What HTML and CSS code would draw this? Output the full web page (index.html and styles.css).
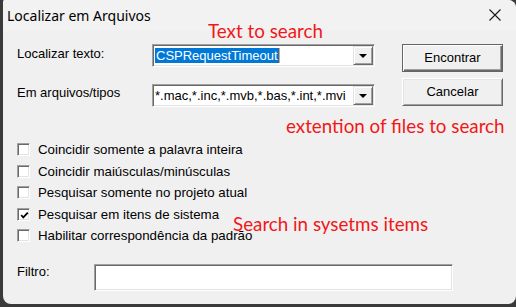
FILE: index.html
```html
<!DOCTYPE html>
<html lang="pt">
<head>
<meta charset="utf-8">
<title>Localizar em Arquivos</title>
<link rel="stylesheet" href="styles.css">
</head>
<body>
<div class="window">
  <div class="titlebar">
    <span class="title">Localizar em Arquivos</span>
    <svg class="close" width="12" height="12" viewBox="0 0 12 12"><path d="M0.5 0.5L11.5 11.5M11.5 0.5L0.5 11.5" stroke="#1a1a1a" stroke-width="1.1" fill="none"/></svg>
  </div>
  <div class="content">
    <div class="row row1">
      <span class="lbl">Localizar texto:</span>
      <div class="combo"><span class="field"><span class="sel">CSPRequestTimeout</span><span class="caret"></span></span><span class="drop"><i class="arrow"></i></span></div>
      <div class="btn default"><span class="btn-in">Encontrar</span></div>
    </div>
    <div class="row row2">
      <span class="lbl">Em arquivos/tipos</span>
      <div class="combo"><span class="field">*.mac,*.inc,*.mvb,*.bas,*.int,*.mvi</span><span class="drop"><i class="arrow"></i></span></div>
      <div class="btn"><span class="btn-in">Cancelar</span></div>
    </div>
    <div class="checks">
      <div class="check r22"><span class="box"></span><span class="ctext">Coincidir somente a palavra inteira</span></div>
      <div class="check r21"><span class="box"></span><span class="ctext">Coincidir maiúsculas/minúsculas</span></div>
      <div class="check r22"><span class="box"></span><span class="ctext">Pesquisar somente no projeto atual</span></div>
      <div class="check r21"><span class="box"><svg width="9" height="9" viewBox="0 0 9 9"><path d="M1.2 4.2L3.3 6.4L7.8 1.6" stroke="#000" stroke-width="1.7" fill="none"/></svg></span><span class="ctext">Pesquisar em itens de sistema</span></div>
      <div class="check r22"><span class="box"></span><span class="ctext">Habilitar correspondência da padrão</span></div>
    </div>
    <div class="row filter">
      <span class="lbl">Filtro:</span>
      <div class="input"></div>
    </div>
  </div>
  <span class="note note1">Text to search</span>
  <span class="note note2">extention of files to search</span>
  <span class="note note3">Search in sysetms items</span>
</div>
</body>
</html>
```
FILE: styles.css
```css
* { box-sizing: border-box; margin: 0; padding: 0; }
html, body { width: 516px; height: 307px; overflow: hidden; }
body {
  background: #3a3a3a;
  font-family: "Liberation Sans", Arial, sans-serif;
  font-size: 13px;
  color: #000;
}
.window {
  position: relative;
  margin-left: 3px;
  width: 513px;
  height: 304px;
  background: #f0f0f0;
  border-radius: 2px 8px 8px 8px;
  overflow: hidden;
}
.titlebar {
  height: 31px;
  display: flex;
  align-items: center;
  justify-content: space-between;
  padding: 0 15px 0 4px;
  background: #f2f2f2;
}
.title {
  font-family: "Noto Sans", sans-serif;
  font-size: 14px;
  color: #000;
}
.close { margin-top: -2px; }
.content { padding: 13px 0 0 14px; }
.lbl { line-height: 15px; display: block; }
.row { display: flex; align-items: flex-start; }
.row1 { height: 28px; }
.row1 .lbl { width: 135px; margin-top: 2px; }
.row2 { margin-top: 6px; height: 29px; }
.row2 .lbl { width: 135px; margin-top: 7px; }
.row2 .combo { margin-top: 6px; }

.combo {
  width: 223px;
  height: 23px;
  background: #fff;
  border-style: solid;
  border-width: 1px;
  border-color: #a0a0a0 #fff #fff #a0a0a0;
  box-shadow: inset 1px 1px 0 #696969, inset -1px -1px 0 #e3e3e3;
  display: flex;
  padding: 1px;
}
.field {
  flex: 1;
  display: flex;
  align-items: center;
  padding-left: 1px;
  line-height: 15px;
  white-space: nowrap;
  overflow: hidden;
}
.sel {
  background: #0078d7;
  color: #fff;
  padding: 0 1px 0 1px;
  line-height: 15px;
}
.caret { width: 1px; height: 15px; background: #f0a050; }
.drop {
  width: 20px;
  height: 19px;
  background: #f0f0f0;
  border-style: solid;
  border-width: 1px;
  border-color: #e3e3e3 #696969 #696969 #e3e3e3;
  box-shadow: inset 1px 1px 0 #fff, inset -1px -1px 0 #a0a0a0;
  display: flex;
  align-items: center;
  justify-content: center;
}
.arrow {
  width: 0; height: 0;
  border-left: 4px solid transparent;
  border-right: 4px solid transparent;
  border-top: 4px solid #000;
  margin-top: 1px;
}
.btn {
  width: 101px;
  height: 28px;
  margin-left: 27px;
  background: #f0f0f0;
  border-style: solid;
  border-width: 1px;
  border-color: #fff #696969 #696969 #fff;
  box-shadow: inset 1px 1px 0 #e3e3e3, inset -1px -1px 0 #a0a0a0;
  display: flex;
}
.btn-in {
  flex: 1;
  display: flex;
  align-items: center;
  justify-content: center;
  line-height: 15px;
  padding-bottom: 1px;
}
.btn.default {
  border: 1px solid #646464;
  box-shadow: inset 1px 1px 0 #fff, inset -1px -1px 0 #696969, inset -2px -2px 0 #a0a0a0;
}
.checks { margin-top: 35px; }
.check { display: flex; align-items: flex-start; }
.r22 { height: 22px; }
.r21 { height: 21px; }
.box {
  width: 13px;
  height: 13px;
  margin-top: 1px;
  margin-right: 8px;
  background: #fff;
  border-style: solid;
  border-width: 1px;
  border-color: #a0a0a0 #fff #fff #a0a0a0;
  box-shadow: inset 1px 1px 0 #696969, inset -1px -1px 0 #e3e3e3;
  display: flex;
  align-items: center;
  justify-content: center;
}
.box svg { margin: 1px 0 0 1px; }
.ctext { line-height: 15px; font-size: 13.3px; }
.filter { margin-top: 14px; }
.filter .lbl { width: 77px; }
.input {
  width: 359px;
  height: 27px;
  background: #fff;
  border-style: solid;
  border-width: 1px;
  border-color: #a0a0a0 #fff #fff #a0a0a0;
  box-shadow: inset 1px 1px 0 #696969, inset -1px -1px 0 #e3e3e3;
}
.note {
  position: absolute;
  font-family: Lato, "Noto Sans", sans-serif;
  font-size: 18.8px;
  line-height: 1;
  color: #f01818;
  white-space: nowrap;
}
.note1 { left: 205px; top: 22px; }
.note2 { left: 283px; top: 117px; }
.note3 { left: 230px; top: 215px; }
```
